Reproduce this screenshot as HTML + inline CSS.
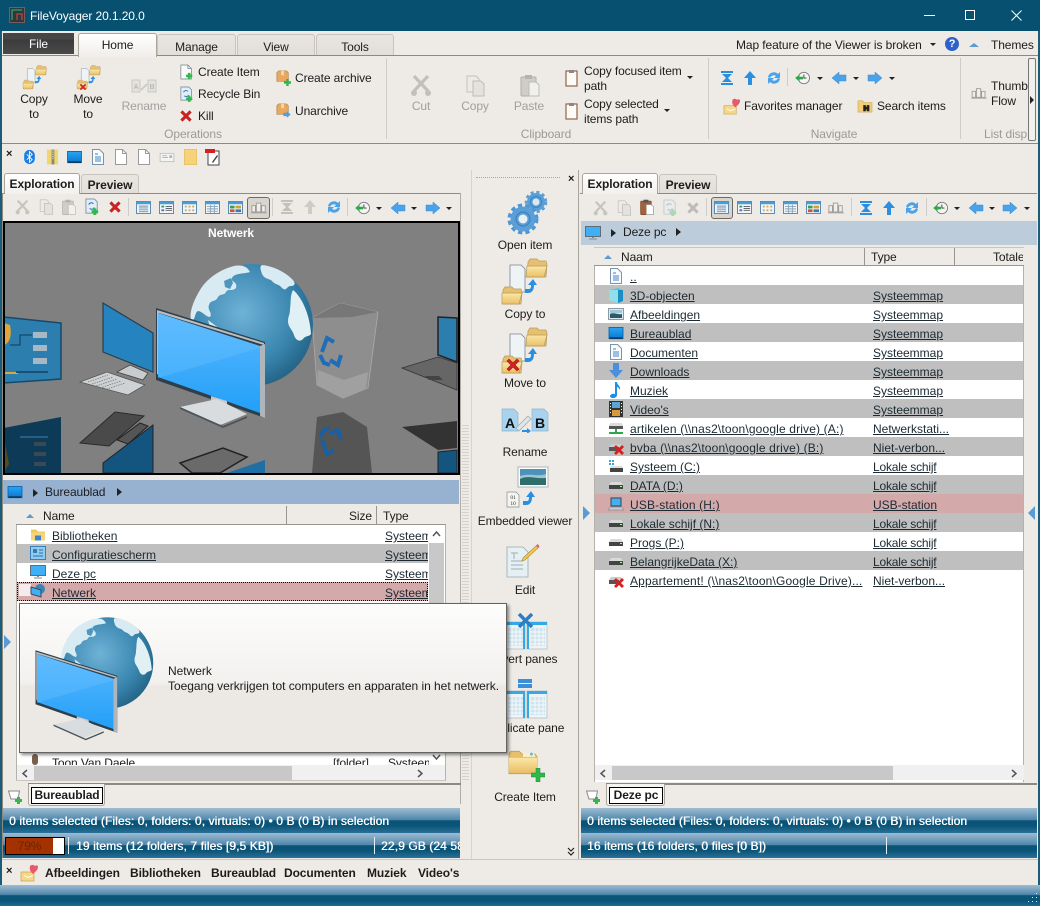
<!DOCTYPE html>
<html><head><meta charset="utf-8"><title>FileVoyager</title>
<style>
*{box-sizing:border-box}
html,body{margin:0;padding:0}
body{width:1040px;height:906px;overflow:hidden;position:relative;background:#eeebe6;font:12px/16px "Liberation Sans",sans-serif;color:#1c1c1c;letter-spacing:-.1px}
.a,.t,.c,svg.i{position:absolute}
.t{white-space:nowrap}
.c{white-space:nowrap;text-align:center;width:120px}
.g{color:#a0a0a0}
.l{color:#9a9a9a}
.tab{position:absolute;background:linear-gradient(#e9e5e0,#e2ded9);border:1px solid #c8c4bd;border-bottom:0;border-radius:3px 3px 0 0;text-align:center}
.stat{position:absolute;height:25px;background:linear-gradient(#9dbcd2 0%,#4f86aa 48%,#0a5478 50%,#0a5478 70%,#2a7098 100%);color:#fff;overflow:hidden;text-shadow:.4px 0 0 #fff;letter-spacing:.1px}
.r{position:absolute;height:19px;line-height:19px;margin-top:1px;white-space:nowrap;text-decoration:underline;color:#1c2a33;letter-spacing:0}
.p{letter-spacing:.15px}
.bg{position:absolute;height:19px}
.tri{position:absolute;width:0;height:0;border-style:solid}
.dn{border-width:3px 3px 0 3px;border-color:#222 transparent transparent transparent}
.rt{border-width:4px 0 4px 5px;border-color:transparent transparent transparent #222}
.up{border-width:0 5px 4px 5px;border-color:transparent transparent #5b9bd0 transparent}
.sep{position:absolute;width:1px;background:#cfcbc5}
.b{font-weight:bold}
</style></head><body>
<svg width="0" height="0" style="position:absolute">
<defs>
<linearGradient id="gsc" x1="0" y1="0" x2="0" y2="1"><stop offset="0" stop-color="#5cb8ff"/><stop offset="1" stop-color="#22a0f8"/></linearGradient>
<radialGradient id="ggl" cx=".42" cy=".4" r=".7"><stop offset="0" stop-color="#6fb2d6"/><stop offset=".6" stop-color="#3a86b0"/><stop offset="1" stop-color="#1d5878"/></radialGradient>
<linearGradient id="gfo" x1="0" y1="0" x2="0" y2="1"><stop offset="0" stop-color="#fbe6a8"/><stop offset="1" stop-color="#eac168"/></linearGradient>
<linearGradient id="gde" x1="0" y1="0" x2="0" y2="1"><stop offset="0" stop-color="#2aa5f2"/><stop offset="1" stop-color="#0a78cf"/></linearGradient>
<symbol id="globemon" viewBox="150 260 180 170" overflow="visible">
<circle cx="252" cy="325" r="61" fill="url(#ggl)"/>
<path d="M200 290c6-10 18-20 34-24 10-2 14 2 16 6-6 2-16 1-18 6-2 4 6 3 4 10-4 4-8 0-10 4-2 4-5 1-8 5-3 6-7 2-9 8-2 5 4 8 1 12-4 0-8-6-12-6-4 2-2 10-7 9-2-8 3-20 9-30z" fill="#d8ebf2"/>
<path d="M224 281l7-3 2 5-3 6-5-2z" fill="#4d97bf"/>
<path d="M262 265c10 1 22 6 30 14 5 5 2 7-1 7-5 0-4 6-9 2-3-4-6-3-9-6-3-4-8-2-11-8-1-4-3-7 0-9z" fill="#d8ebf2"/>
<path d="M293 290c8 6 17 24 18 44-2 3-5 1-8 5-4 4-8 0-9-4-2-6-6-8-6-14 0-5 2-6 2-12 1-6 0-14 3-19z" fill="#e0f0f5"/>
<path d="M208 320l8 6 5 4-3 2-8-5z" fill="#d8ebf2"/>
<path d="M156 308l109 34v76l-109-38z" fill="#2e3f4a"/>
<path d="M157 310l107 33v2l-105-32v62l-2-1z" fill="#b8bec2"/>
<path d="M158 313l102 33v67l-102-36z" fill="url(#gsc)"/>
<path d="M158 313l102 33v2l-102 30z" fill="#6bc3ff" opacity=".35"/>
<path d="M260 346l5-2v74l-5 -2z" fill="#aeb6bb"/>
<path d="M211 396l16 5 0 8-16-3z" fill="#c2c8cc"/>
<path d="M180 407l37-8 30 15-24 10-4 1z" fill="#d8dcdf"/>
<path d="M180 407l43 19 24-10v2l-24 10-43-19z" fill="#4c555b"/>
</symbol>
<symbol id="ct" viewBox="500 258 50 50">
<path d="M510 265h11l4 4v23h-15z" fill="#eef3f6" stroke="#7a8790" stroke-width=".8"/>
<path d="M528 262l2-3h7l2 2h7l1 3-1 13h-19z" fill="#e6c070" stroke="#b59a58" stroke-width=".7"/>
<path d="M527 266h20l-3 11h-18z" fill="url(#gfo)" stroke="#b59a58" stroke-width=".7"/>
<path d="M503 290l2-3h7l2 2h7l1 3-1 12h-18z" fill="#e6c070" stroke="#b59a58" stroke-width=".7"/>
<path d="M502 293h20l-3 11h-17z" fill="url(#gfo)" stroke="#b59a58" stroke-width=".7"/>
<path d="M525 289h4c2 0 2-2 2-4h-3l5-6 4 6h-3c0 5-2 8-6 8h-3z" fill="#2a8fe0"/>
</symbol>
<symbol id="gears" viewBox="505 188 48 48">
<circle cx="536" cy="202" r="9.5" fill="none" stroke="#5a9fd8" stroke-width="3.5" stroke-dasharray="3 2.6"/>
<circle cx="536" cy="202" r="9" fill="#5a9fd8"/><circle cx="536" cy="202" r="3.5" fill="#d8e8f4"/><circle cx="536" cy="202" r="5.5" fill="none" stroke="#3f83bd" stroke-width="1"/>
<circle cx="523" cy="219" r="13" fill="none" stroke="#4f97d4" stroke-width="5" stroke-dasharray="4 3"/>
<circle cx="523" cy="219" r="12.5" fill="#5a9fd8"/><circle cx="523" cy="219" r="4.5" fill="#e8f0f6"/><circle cx="523" cy="219" r="7" fill="none" stroke="#3f83bd" stroke-width="1.2"/>
</symbol>
<symbol id="rename" viewBox="500 407 50 26">
<path d="M502 409h12l4 4v18h-16z" fill="#a9d2ee" stroke="#8fb4cc" stroke-width=".7"/>
<path d="M532 409h12l4 4v18h-16z" fill="#a9d2ee" stroke="#8fb4cc" stroke-width=".7"/>
<text x="505" y="428" font-size="14" font-weight="bold" font-family="Liberation Sans" fill="#111">A</text>
<text x="535" y="428" font-size="14" font-weight="bold" font-family="Liberation Sans" fill="#111">B</text>
<path d="M516 428l12-12 3 3-12 12z" fill="#dfe6ea" stroke="#9aa5ab" stroke-width=".7"/>
<path d="M522 430h5v-2l4 3-4 3v-2h-5z" fill="#2a8fe0"/>
</symbol>
<symbol id="embed" viewBox="505 465 45 44">
<rect x="518" y="467" width="30" height="20" fill="#fff" stroke="#aab4ba"/>
<rect x="520" y="469" width="26" height="16" fill="#9fc4d4"/><path d="M520 479c8-4 14 0 26-1v7h-26z" fill="#2d6d6a"/><path d="M520 469h26v5c-8 3-16-1-26 2z" fill="#4d92b8"/>
<path d="M507 492h9l3 3v12h-12z" fill="#f4f4f0" stroke="#8a8f8f" stroke-width=".7"/>
<text x="513" y="499" font-size="5.5" text-anchor="middle" font-family="Liberation Serif" fill="#333">01</text>
<text x="513" y="505" font-size="5.5" text-anchor="middle" font-family="Liberation Serif" fill="#333">10</text>
<path d="M523 501h4c2 0 2-2 2-4h-3l5-6 4 6h-3c0 5-2 8-6 8h-3z" fill="#2a8fe0"/>
</symbol>
<symbol id="edit" viewBox="505 541 36 38">
<path d="M507 547h16l5 5v25h-21z" fill="#e5f0f4" stroke="#9aa8ae" stroke-width=".8"/>
<path d="M511 553h7M514 553v6M511 561h12M511 565h12M511 569h12" stroke="#a0acb2" fill="none"/>
<path d="M523 558l14-13 2 2-14 13-3 1z" fill="#f2c94c" stroke="#a88a2c" stroke-width=".6"/>
<path d="M536 546l1.500-2 2 2-1.500 2z" fill="#e0607a"/>
</symbol>
<symbol id="panes" viewBox="505 612 44 38">
<path d="M505 622h20v27h-20zM527 622h20v27h-20z" fill="#eef3f6" stroke="#aebcc4" stroke-width=".7"/>
<path d="M527 622h2v27h-2zM529 622h18v3h-18zM505 622h20v3h-20zM523 622h2v27h-2z" fill="#35a8e6"/>
<path d="M508 628h15v18h-15zM531 628h14v18h-14z" fill="#cfe3ee"/>
<path d="M508 632h15M508 636h15M508 640h15M508 644h15M512 628v18M516 628v18M520 628v18M531 632h14M531 636h14M531 640h14M531 644h14M535 628v18M539 628v18M543 628v18" stroke="#fff" stroke-width=".8"/>
</symbol>
<symbol id="fold" viewBox="0 0 32 26">
<path d="M1 4l2-3h9l3 3h14l2 3v18H1z" fill="#e8bf6a" stroke="#b69650" stroke-width=".7"/>
<path d="M1 8h30v15H1z" fill="url(#gfo)"/>
<path d="M16 3h9c3 0 4 2 4 4h-13z" fill="#fdf0c8"/><circle cx="25" cy="4" r="1.500" fill="#5fb8d0"/>
</symbol>
<symbol id="plus" viewBox="0 0 14 14"><path d="M5 0h4v5h5v4H9v5H5V9H0V5h5z" fill="#2fb84b" stroke="#1a8a34" stroke-width=".5"/></symbol>
<symbol id="redx" viewBox="0 0 16 16"><path d="M2 4l2-2 4 4 4-4 2 2-4 4 4 4-2 2-4-4-4 4-2-2 4-4z" fill="#d42020" stroke="#a91414" stroke-width=".6"/></symbol>
<symbol id="scis" viewBox="0 0 22 22"><path d="M4 1l14 15M18 1L4 16" stroke="currentColor" stroke-width="3.200" fill="none"/><circle cx="4" cy="18" r="3" fill="currentColor"/><circle cx="18" cy="18" r="3" fill="currentColor"/></symbol>
<symbol id="copy" viewBox="0 0 22 22"><path d="M3 1h9l3 3v13H3z" fill="#eceae6" stroke="#c4c2bd"/><path d="M9 6h8l3 3v12H9z" fill="#e4e2de" stroke="#bebcb7"/></symbol>
<symbol id="paste" viewBox="0 0 22 24"><rect x="2" y="3" width="15" height="19" rx="1" fill="#cfcdc8" stroke="#b0aea9"/><rect x="6" y="1" width="7" height="4" fill="#b6b4af"/><path d="M10 8h7l3 3v11H10z" fill="#f2f0ed" stroke="#bebcb7"/></symbol>
<symbol id="pastec" viewBox="0 0 22 24"><rect x="2" y="3" width="15" height="19" rx="1" fill="#a5623a" stroke="#7a4526"/><rect x="6" y="1" width="7" height="4" fill="#555"/><path d="M10 8h7l3 3v11H10z" fill="#fff" stroke="#999"/></symbol>
<symbol id="recyc" viewBox="0 0 16 18"><path d="M1 1h9l3 3v12H1z" fill="#e3edf5" stroke="#6c7f8e" stroke-width=".8"/><path d="M4 7a3 3 0 0 1 5-1M10 10a3 3 0 0 1-5 1" stroke="#2a7fd0" fill="none" stroke-width="1.200"/><path d="M9 11h3v2h2v3h-2v2H9v-2H7v-3h2z" fill="#2fb84b"/></symbol>
<symbol id="cit" viewBox="0 0 16 18"><path d="M1 1h8l4 4v12H1z" fill="#fafafa" stroke="#6c7f8e" stroke-width=".8"/><path d="M9 1v4h4" fill="none" stroke="#6c7f8e" stroke-width=".8"/><path d="M9 10h3v2h2v3h-2v2H9v-2H7v-3h2z" fill="#2fb84b"/></symbol>
<symbol id="box" viewBox="0 0 16 16"><path d="M1 3l2-2h9l2 2v10H1z" fill="#e7a860" stroke="#b07a3c" stroke-width=".7"/><path d="M6 1h3v5H6z" fill="#f7dbb0"/></symbol>
<symbol id="clipb" viewBox="0 0 13 18"><rect x="1" y="2" width="11" height="15" fill="#fdfbf6" stroke="#94614a" stroke-width="1.200"/><rect x="4" y="1" width="5" height="3" fill="#888"/></symbol>
<symbol id="v1" viewBox="0 0 16 14"><rect x=".5" y=".5" width="15" height="13" fill="#f2f6fa" stroke="#4b86b8"/><rect x="1" y="1" width="14" height="2.500" fill="#4b9bd6"/><path d="M3 5.500h10M3 7.500h10M3 9.500h10M3 11.500h10" stroke="#6f8ea8"/></symbol>
<symbol id="v2" viewBox="0 0 16 14"><rect x=".5" y=".5" width="15" height="13" fill="#f2f6fa" stroke="#4b86b8"/><rect x="1" y="1" width="14" height="2.500" fill="#4b9bd6"/><rect x="2.500" y="5" width="3" height="2" fill="#3a9a5a"/><rect x="2.500" y="9" width="3" height="2" fill="#3a7aba"/><path d="M7 6h7M7 10h7M7 8h7" stroke="#555"/></symbol>
<symbol id="v3" viewBox="0 0 16 14"><rect x=".5" y=".5" width="15" height="13" fill="#f2f6fa" stroke="#4b86b8"/><rect x="1" y="1" width="14" height="2.500" fill="#4b9bd6"/><path d="M3 5h2v2H3zM7 5h2v2H7zM11 5h2v2h-2zM3 9h2v2H3zM7 9h2v2H7zM11 9h2v2h-2z" fill="#d6a850"/></symbol>
<symbol id="v4" viewBox="0 0 16 14"><rect x=".5" y=".5" width="15" height="13" fill="#f2f6fa" stroke="#4b86b8"/><rect x="1" y="1" width="14" height="2.500" fill="#4b9bd6"/><path d="M2 6h12M2 8.500h12M2 11h12M6 4v9M10 4v9" stroke="#8aa4b8"/></symbol>
<symbol id="v5" viewBox="0 0 16 14"><rect x=".5" y=".5" width="15" height="13" fill="#f2f6fa" stroke="#4b86b8"/><rect x="1" y="1" width="14" height="2.500" fill="#4b9bd6"/><path d="M2 5h5v3H2z" fill="#3aa050"/><path d="M8 5h6v3H8z" fill="#d6a030"/><path d="M2 9h5v3H2z" fill="#d05040"/><path d="M8 9h6v3H8z" fill="#3a7aba"/></symbol>
<symbol id="thumb" viewBox="0 0 18 14"><path d="M1 5h4v7H1zM6 2h5v10H6zM12 5h4v7h-4z" fill="#f0eeea" stroke="#9c9a96"/><path d="M0 13h18" stroke="#9c9a96"/></symbol>
<symbol id="top" viewBox="0 0 16 16"><path d="M2 1h12v2H2zM3 4h10L9 8l4 4H3l4-4zM2 13h12v2H2z" fill="currentColor"/></symbol>
<symbol id="upa" viewBox="0 0 16 16"><path d="M8 1l6 7h-4v7H6V8H2z" fill="currentColor"/></symbol>
<symbol id="refr" viewBox="0 0 16 16"><path d="M2 7a6 6 0 0 1 10-3l2-2v6H8l2-2A4 4 0 0 0 4 8zM14 9a6 6 0 0 1-10 3l-2 2V8h6L6 10a4 4 0 0 0 6-2z" fill="#4aa3e8"/></symbol>
<symbol id="clock" viewBox="0 0 18 16"><circle cx="10" cy="8" r="6.500" fill="#f4f4f0" stroke="#778"/><path d="M10 4v4h3" stroke="#333" fill="none"/><path d="M0 8l5-4v2.500h4v3H5V12z" fill="#2fa84b"/></symbol>
<symbol id="la" viewBox="0 0 16 14"><path d="M1 7l7-6v3h7v6H8v3z" fill="#4aa3e8" stroke="#3b8ad0" stroke-width=".5"/></symbol>
<symbol id="ra" viewBox="0 0 16 14"><path d="M15 7L8 1v3H1v6h7v3z" fill="#4aa3e8" stroke="#3b8ad0" stroke-width=".5"/></symbol>
<symbol id="desk" viewBox="0 0 16 14"><rect x=".5" y=".5" width="15" height="12" fill="url(#gde)" stroke="#0a6ab0"/><path d="M1 11h14v2H1z" fill="#0a3f6a"/></symbol>
<symbol id="pc" viewBox="0 0 16 14"><rect x=".5" y=".5" width="15" height="10" fill="#3fb0f5" stroke="#5d6e78"/><path d="M7 11h2v1H7zM4 12.500h8v1H4z" fill="#7e8b93"/></symbol>
<symbol id="page" viewBox="0 0 12 16"><path d="M.5.500h7l4 4v11H.5z" fill="#fff" stroke="#9a9a9a"/><path d="M7.500.500v4h4" fill="none" stroke="#9a9a9a"/></symbol>
<symbol id="docl" viewBox="0 0 12 16"><path d="M.5.500h7l4 4v11H.5z" fill="#f8fbfe" stroke="#7b93a8"/><path d="M3 5h3M3 8h6M3 10h6M3 12h6" stroke="#3f86c6"/></symbol>
<symbol id="sysf" viewBox="0 0 16 14"><path d="M1 2h5l2 2h7v9H1z" fill="#f0c860"/><path d="M1 5h14v8H1z" fill="#f5d47c"/><path d="M5 8h6v5H5z" fill="#3a85c5"/></symbol>
<symbol id="ctrl" viewBox="0 0 16 14"><rect x=".5" y=".5" width="15" height="13" fill="#8fcdf0" stroke="#3a80b8"/><rect x="3" y="3" width="4" height="4" fill="#3a7ab0"/><path d="M9 4h4M9 7h4M3 10h10" stroke="#2f6fa6"/></symbol>
<symbol id="net" viewBox="0 0 16 14"><circle cx="10" cy="5" r="5" fill="#3a86b0"/><path d="M1 3l10 3v7L1 10z" fill="#3fb0f5" stroke="#445"/></symbol>
<symbol id="cube" viewBox="0 0 16 16"><path d="M1 3l9-2 5 2v11l-5 2-9-3z" fill="#55c6dd"/><path d="M10 3l5 0v11l-5 2z" fill="#1b8fc4"/><path d="M1 3l9 0v13l-9-3z" fill="#8fe0ec"/></symbol>
<symbol id="pic" viewBox="0 0 16 12"><rect x=".5" y=".5" width="15" height="11" fill="#dde9f1" stroke="#8b99a3"/><path d="M2 2h12v3H2z" fill="#a4c6dc"/><path d="M2 6c4-2 8 1 12 0v4H2z" fill="#2e5a66"/></symbol>
<symbol id="dl" viewBox="0 0 16 16"><path d="M5 0h6v7h4l-7 8-7-8h4z" fill="#4a90de"/></symbol>
<symbol id="note" viewBox="0 0 12 16"><path d="M5 0h2c0 3 4 4 3 8-1-2-2-3-3-3v8c0 2-2 3-4 3s-3-1-3-2 2-3 5-2z" fill="#1c8fe8"/></symbol>
<symbol id="film" viewBox="0 0 14 16"><rect width="14" height="16" fill="#333"/><rect x="3" y="1" width="8" height="6" fill="#5aa6d0"/><rect x="3" y="9" width="8" height="6" fill="#d69a3a"/><path d="M1 2h1v1H1zM1 5h1v1H1zM1 8h1v1H1zM1 11h1v1H1zM12 2h1v1h-1zM12 5h1v1h-1zM12 8h1v1h-1zM12 11h1v1h-1z" fill="#fff"/></symbol>
<symbol id="drv" viewBox="0 0 16 14"><path d="M1 8l2-3h10l2 3z" fill="#dadada"/><rect x="1" y="8" width="14" height="4" fill="#444"/><rect x="12" y="9" width="2" height="1" fill="#9f9"/></symbol>
<symbol id="ndrv" viewBox="0 0 16 14"><path d="M2 1h12l1 3H1z" fill="#ddd"/><rect x="1" y="4" width="14" height="3" fill="#555"/><path d="M7 7h2v3h6v2H1v-2h6z" fill="#2fa84b"/></symbol>
<symbol id="xdrv" viewBox="0 0 16 14"><path d="M1 6l2-3h10l2 3z" fill="#ccc"/><rect x="1" y="6" width="10" height="4" fill="#555"/><path d="M6 6l2-2 3 3 3-3 2 2-3 3 3 3-2 2-3-3-3 3-2-2 3-3z" fill="#d42020"/></symbol>
<symbol id="sdrv" viewBox="0 0 16 14"><path d="M1 1h2v2H1zM4 1h2v2H4zM1 4h2v2H1zM4 4h2v2H4z" fill="#30a8e0"/><path d="M2 9l1-2h11l1 2z" fill="#ddd"/><rect x="2" y="9" width="13" height="4" fill="#444"/></symbol>
<symbol id="lap" viewBox="0 0 16 14"><rect x="3" y="1" width="10" height="8" fill="#45b0ee" stroke="#345"/><path d="M2 10h12l2 3H0z" fill="#c4cbd0" stroke="#678" stroke-width=".5"/></symbol>
<symbol id="fav" viewBox="0 0 18 18"><path d="M1 8h13v9H1z" fill="#f6d788" stroke="#c9a550" stroke-width=".7"/><path d="M10 2c2-2 4-1 5 0 1-1 3-1 3 1 0 3-3 5-5 7-2-2-4-4-3-8z" fill="#e85a6a"/><path d="M4 11l4 2 5-2v1l-5 2-4-2z" fill="#fff"/></symbol>
<symbol id="srch" viewBox="0 0 18 16"><path d="M1 2h5l2 2h9v11H1z" fill="#f2ce78" stroke="#c9a550" stroke-width=".7"/><path d="M7 7h3v7H7zM11 7h3v7h-3zM9 9h3v3H9z" fill="#222"/></symbol>
<symbol id="addt" viewBox="0 0 16 14"><path d="M.5 1h11l-1 5-1 3H3z" fill="#fff" stroke="#8a8a8a"/><path d="M9 7h3v2h2v3h-2v2H9v-2H7V9h2z" fill="#2fb84b"/></symbol>
<symbol id="bt" viewBox="0 0 14 18"><rect x="1" y="1" width="12" height="16" rx="6" fill="#1d7fe6"/><path d="M4 6l6 6-3 3V3l3 3-6 6" stroke="#fff" fill="none"/></symbol>
<symbol id="zip" viewBox="0 0 14 16"><rect x="1" y="0" width="12" height="16" fill="#f1d474"/><path d="M6 0h3v16H6z" fill="#8a8a6a"/><path d="M7 1h1v1H7zM7 3h1v1H7zM7 5h1v1H7zM7 7h1v1H7zM7 9h1v1H7z" fill="#fff"/></symbol>
<symbol id="mail" viewBox="0 0 16 12"><rect x=".5" y="1.500" width="15" height="9" fill="#f4f4f2" stroke="#c0c0bc"/><path d="M3 4h5M3 6h6M11 4h2v2h-2z" stroke="#a8b8c4" fill="#a8b8c4"/></symbol>
<symbol id="fy" viewBox="0 0 13 16"><rect width="13" height="16" fill="#f6d27a" stroke="#e0b850"/></symbol>
<symbol id="pdf" viewBox="0 0 16 17"><path d="M3 2h11v14H3z" fill="#fff" stroke="#444"/><rect y="0" width="10" height="4" fill="#d42020"/><path d="M7 13l5-7 1 1-5 7z" fill="#444"/></symbol>
<symbol id="ren" viewBox="0 0 26 14"><rect x="1" y="1" width="8" height="12" fill="#e4e2de" stroke="#cac8c3"/><rect x="17" y="1" width="8" height="12" fill="#e4e2de" stroke="#cac8c3"/><path d="M10 11l6-6" stroke="#ccc" stroke-width="2"/><text x="5" y="10" font-size="7" text-anchor="middle" font-family="Liberation Sans" fill="#aaa">A</text><text x="21" y="10" font-size="7" text-anchor="middle" font-family="Liberation Sans" fill="#aaa">B</text></symbol>
<symbol id="logo" viewBox="0 0 16 16"><rect x=".5" y=".5" width="15" height="15" fill="#2b3a3f" stroke="#7a5a5a"/><path d="M3 13V3h10" fill="none" stroke="#3aa06a" stroke-width="1.300"/><path d="M8 13V7h5v6" fill="none" stroke="#c04040" stroke-width="1.300"/></symbol>
</defs></svg>

<!-- Window frame & title -->
<div class="a" style="left:0;top:0;width:1040px;height:31px;background:#07506f"></div>
<svg class="i" style="left:9px;top:7px;width:16px;height:16px"><use href="#logo"/></svg>
<div class="t" style="left:30px;top:8px;color:#fff">FileVoyager 20.1.20.0</div>
<div class="a" style="left:924px;top:15px;width:11px;height:1px;background:#fff"></div>
<div class="a" style="left:965px;top:10px;width:10px;height:10px;border:1px solid #fff"></div>
<svg class="i" style="left:1011px;top:10px;width:11px;height:11px"><path d="M.5.500l10 10M10.500.500l-10 10" stroke="#fff" fill="none"/></svg>

<!-- Tabs row -->
<div class="a" style="left:3px;top:33px;width:71px;height:21px;background:linear-gradient(#464646 0,#464646 30%,#3a3a3a 30%,#4a4a4a 100%);color:#fff;text-align:center;line-height:22px">File</div>
<div class="tab" style="left:157px;top:34px;width:79px;height:21px;line-height:25px">Manage</div>
<div class="tab" style="left:237px;top:34px;width:78px;height:21px;line-height:25px">View</div>
<div class="tab" style="left:316px;top:34px;width:78px;height:21px;line-height:25px">Tools</div>
<div class="a" style="left:2px;top:55px;width:1036px;height:1px;background:#8c8a82"></div>
<div class="a" style="left:78px;top:33px;width:79px;height:24px;background:linear-gradient(#fff,#f0eeea);border:1px solid #aaa69e;border-bottom:0;border-radius:3px 3px 0 0;text-align:center;line-height:23px">Home</div>
<div class="t" style="left:736px;top:37px">Map feature of the Viewer is broken</div>
<div class="tri dn" style="left:930px;top:43px"></div>
<div class="a" style="left:945px;top:37px;width:14px;height:14px;border-radius:7px;background:#2f62c8;color:#fff;text-align:center;font-weight:bold;font-size:11px;line-height:14px">?</div>
<div class="tri up" style="left:969px;top:43px"></div>
<div class="t" style="left:991px;top:37px">Themes</div>

<!-- Ribbon -->
<svg class="i" style="left:22px;top:65px;width:26px;height:26px"><use href="#ct"/></svg>
<div class="c" style="left:-26px;top:91px">Copy</div><div class="c" style="left:-26px;top:106px">to</div>
<svg class="i" style="left:76px;top:65px;width:26px;height:26px"><use href="#ct"/></svg>
<svg class="i" style="left:79px;top:83px;width:8px;height:8px"><use href="#redx"/></svg>
<div class="c" style="left:28px;top:91px">Move</div><div class="c" style="left:28px;top:106px">to</div>
<svg class="i" style="left:131px;top:79px;width:26px;height:14px"><use href="#ren"/></svg>
<div class="c g" style="left:84px;top:98px">Rename</div>
<svg class="i" style="left:180px;top:64px;width:14px;height:16px"><use href="#cit"/></svg>
<div class="t" style="left:198px;top:64px">Create Item</div>
<svg class="i" style="left:180px;top:86px;width:14px;height:16px"><use href="#recyc"/></svg>
<div class="t" style="left:198px;top:86px">Recycle Bin</div>
<svg class="i" style="left:179px;top:109px;width:14px;height:14px"><use href="#redx"/></svg>
<div class="t" style="left:198px;top:108px">Kill</div>
<svg class="i" style="left:276px;top:70px;width:14px;height:14px"><use href="#box"/></svg>
<svg class="i" style="left:284px;top:79px;width:7px;height:7px"><use href="#plus"/></svg>
<div class="t" style="left:295px;top:70px">Create archive</div>
<svg class="i" style="left:276px;top:103px;width:14px;height:14px"><use href="#box"/></svg>
<svg class="i" style="left:283px;top:111px;width:8px;height:7px"><use href="#ra"/></svg>
<div class="t" style="left:295px;top:103px">Unarchive</div>
<div class="c l" style="left:133px;top:126px">Operations</div>
<div class="sep" style="left:386px;top:58px;height:81px"></div>

<svg class="i" style="left:410px;top:75px;width:22px;height:22px;color:#c2c0bb"><use href="#scis"/></svg>
<div class="c g" style="left:361px;top:98px">Cut</div>
<svg class="i" style="left:464px;top:75px;width:22px;height:22px"><use href="#copy"/></svg>
<div class="c g" style="left:415px;top:98px">Copy</div>
<svg class="i" style="left:519px;top:74px;width:22px;height:24px"><use href="#paste"/></svg>
<div class="c g" style="left:469px;top:98px">Paste</div>
<svg class="i" style="left:565px;top:69px;width:13px;height:18px"><use href="#clipb"/></svg>
<div class="t" style="left:584px;top:63px">Copy focused item</div><div class="t" style="left:584px;top:78px">path</div>
<div class="tri dn" style="left:687px;top:76px"></div>
<svg class="i" style="left:565px;top:102px;width:13px;height:18px"><use href="#clipb"/></svg>
<div class="t" style="left:584px;top:96px">Copy selected</div><div class="t" style="left:584px;top:111px">items path</div>
<div class="tri dn" style="left:664px;top:109px"></div>
<div class="c l" style="left:486px;top:126px">Clipboard</div>
<div class="sep" style="left:708px;top:58px;height:81px"></div>

<svg class="i" style="left:719px;top:70px;width:16px;height:16px;color:#2a8fe0"><use href="#top"/></svg>
<svg class="i" style="left:742px;top:70px;width:16px;height:16px;color:#2a8fe0"><use href="#upa"/></svg>
<svg class="i" style="left:766px;top:70px;width:16px;height:16px"><use href="#refr"/></svg>
<div class="sep" style="left:787px;top:68px;height:18px"></div>
<svg class="i" style="left:795px;top:71px;width:16px;height:14px"><use href="#clock"/></svg>
<div class="tri dn" style="left:817px;top:77px"></div>
<svg class="i" style="left:831px;top:71px;width:16px;height:14px"><use href="#la"/></svg>
<div class="tri dn" style="left:853px;top:77px"></div>
<svg class="i" style="left:867px;top:71px;width:16px;height:14px"><use href="#ra"/></svg>
<div class="tri dn" style="left:889px;top:77px"></div>
<svg class="i" style="left:723px;top:98px;width:17px;height:17px"><use href="#fav"/></svg>
<div class="t" style="left:744px;top:98px">Favorites manager</div>
<svg class="i" style="left:857px;top:99px;width:16px;height:14px"><use href="#srch"/></svg>
<div class="t" style="left:877px;top:98px">Search items</div>
<div class="c l" style="left:774px;top:126px">Navigate</div>
<div class="sep" style="left:960px;top:58px;height:81px"></div>
<svg class="i" style="left:971px;top:87px;width:16px;height:12px"><use href="#thumb"/></svg>
<div class="a" style="left:991px;top:78px;width:37px;height:32px;overflow:hidden"><div class="t" style="left:0;top:0">Thumb</div><div class="t" style="left:0;top:15px">Flow</div></div>
<div class="a" style="left:984px;top:126px;width:43px;height:16px;overflow:hidden;color:#9a9a9a;white-space:nowrap">List display</div>
<div class="a" style="left:1028px;top:58px;width:8px;height:83px;border:1px solid #777;border-radius:2px;background:#f2f0ec"></div>
<div class="tri rt" style="left:1030px;top:96px;border-width:4px 0 4px 4px"></div>
<div class="a" style="left:2px;top:143px;width:1036px;height:1px;background:#8c8a82"></div>

<!-- Quick bar -->
<div class="t b" style="left:6px;top:146px;font-size:11px">×</div>
<svg class="i" style="left:23px;top:149px;width:13px;height:16px"><use href="#bt"/></svg>
<svg class="i" style="left:46px;top:149px;width:13px;height:16px"><use href="#zip"/></svg>
<svg class="i" style="left:66px;top:151px;width:17px;height:13px"><use href="#desk"/></svg>
<svg class="i" style="left:91px;top:149px;width:14px;height:16px"><use href="#docl"/></svg>
<svg class="i" style="left:115px;top:149px;width:12px;height:16px"><use href="#page"/></svg>
<svg class="i" style="left:138px;top:149px;width:12px;height:16px"><use href="#page"/></svg>
<svg class="i" style="left:159px;top:152px;width:16px;height:11px"><use href="#mail"/></svg>
<svg class="i" style="left:184px;top:149px;width:13px;height:16px"><use href="#fy"/></svg>
<svg class="i" style="left:205px;top:149px;width:16px;height:17px"><use href="#pdf"/></svg>

<!-- Left pane -->
<div class="a" style="left:3px;top:193px;width:458px;height:1px;background:#8c8a82"></div>
<div class="a" style="left:460px;top:193px;width:1px;height:611px;background:#b0ada6"></div>
<div class="a" style="left:2px;top:193px;width:1px;height:665px;background:#8c8a82"></div>
<div class="tab b" style="left:81px;top:174px;width:58px;height:19px;line-height:21px;color:#1c1c1c">Preview</div>
<div class="a b" style="left:4px;top:173px;width:76px;height:21px;background:linear-gradient(#fff,#f2f0ec);border:1px solid #a8a49c;border-bottom:0;border-radius:3px 3px 0 0;text-align:center;line-height:20px">Exploration</div>

<svg class="i" style="left:15px;top:200px;width:15px;height:15px;color:#c6c4bf"><use href="#scis"/></svg>
<svg class="i" style="left:38px;top:199px;width:16px;height:16px"><use href="#copy"/></svg>
<svg class="i" style="left:61px;top:199px;width:16px;height:17px"><use href="#paste"/></svg>
<svg class="i" style="left:85px;top:198px;width:15px;height:17px"><use href="#recyc"/></svg>
<svg class="i" style="left:108px;top:200px;width:14px;height:14px"><use href="#redx"/></svg>
<div class="sep" style="left:128px;top:198px;height:18px"></div>
<svg class="i" style="left:136px;top:201px;width:15px;height:13px"><use href="#v1"/></svg>
<svg class="i" style="left:159px;top:201px;width:15px;height:13px"><use href="#v2"/></svg>
<svg class="i" style="left:182px;top:201px;width:15px;height:13px"><use href="#v3"/></svg>
<svg class="i" style="left:205px;top:201px;width:15px;height:13px"><use href="#v4"/></svg>
<svg class="i" style="left:228px;top:201px;width:15px;height:13px"><use href="#v5"/></svg>
<div class="a" style="left:247px;top:197px;width:23px;height:22px;border:1px solid #6e6a62;border-radius:3px;background:#d8d5cf"></div>
<svg class="i" style="left:251px;top:201px;width:16px;height:13px"><use href="#thumb"/></svg>
<div class="sep" style="left:272px;top:198px;height:18px"></div>
<svg class="i" style="left:279px;top:199px;width:16px;height:16px;color:#c2c0bb"><use href="#top"/></svg>
<svg class="i" style="left:302px;top:199px;width:16px;height:16px;color:#cdcbc6"><use href="#upa"/></svg>
<svg class="i" style="left:326px;top:199px;width:16px;height:16px"><use href="#refr"/></svg>
<div class="sep" style="left:347px;top:198px;height:18px"></div>
<svg class="i" style="left:355px;top:201px;width:16px;height:14px"><use href="#clock"/></svg>
<div class="tri dn" style="left:376px;top:207px"></div>
<svg class="i" style="left:390px;top:201px;width:16px;height:14px"><use href="#la"/></svg>
<div class="tri dn" style="left:411px;top:207px"></div>
<svg class="i" style="left:425px;top:201px;width:16px;height:14px"><use href="#ra"/></svg>
<div class="tri dn" style="left:446px;top:207px"></div>

<!-- Preview image -->
<div class="a" style="left:3px;top:221px;width:457px;height:254px;background:#808080;border:2px solid #000;overflow:hidden"></div>
<svg class="i" style="left:5px;top:223px;width:453px;height:250px" viewBox="5 223 453 250">
<path d="M4 317l57 6v56l-57 4z" fill="#2b7eae" stroke="#15496b" stroke-width="1.500"/>
<path d="M4 345c6-2 8-10 6-20l-6-2zM4 372h14v2H4z" fill="#e0a63a"/>
<path d="M10 345h10v-10h12" stroke="#123a55" fill="none"/>
<path d="M33 332h14v6H33zM33 345h14v6H33zM33 358h14v6H33z" fill="#a6b8c4"/>
<path d="M16 371h32v2H16z" fill="#17507a"/>
<path d="M103 303l50 30v39l-50-20z" fill="#2583c0" stroke="#2c3d4a" stroke-width="1.200"/>
<path d="M117 372l13-7 18 8-5 7z" fill="#c8ccce" stroke="#444" stroke-width=".8"/>
<path d="M80 382l27-10 38 13-17 10z" fill="#cfd2d4" stroke="#555" stroke-width=".8"/>
<path d="M88 382l20-7M92 384l21-7M96 386l21-7M100 388l21-7M104 390l21-7" stroke="#777" stroke-width=".8" stroke-dasharray="1.500 1"/>
<path d="M312 318l28-15 38 9-10 76-25 10-26-13z" fill="#8e8e8e" stroke="#aaa" stroke-width=".8"/>
<path d="M312 318l28-15 38 9-26 5z" fill="#777"/>
<path d="M318 370l26 10 24-8-2 16-23 10-26-13z" fill="#a0a0a0"/>
<g fill="none" stroke="#1f6db8" stroke-width="4"><path d="M322 352l5-14 7 4"/><path d="M330 360l8 5 3-10"/><path d="M320 355l4 8 6 2"/></g>
<path d="M438 317l19 1v44l-19-7z" fill="#2b7eae" stroke="#222" stroke-width="1.500"/>
<path d="M402 368l36-11 19 6v27z" fill="#666" stroke="#333" stroke-width=".8"/>
<path d="M425 376h14l4 4h-14z" fill="#444"/>
<path d="M4 428l57-11v56H4z" fill="#0d3a56"/><path d="M20 436h28v2H20z" fill="#245f88"/><path d="M34 442h12v4H34zM34 452h12v4H34zM34 462h12v4H34z" fill="#3a4a55"/>
<path d="M4 438l5 26-5 8z" fill="#5a4a20"/>
<path d="M80 443l35-31 29 4-35 30z" fill="#4a4a4a" stroke="#2b2b2b"/>
<path d="M117 440l23-17 8 3-20 18z" fill="#555" stroke="#222"/>
<path d="M103 463l50-38v48h-50z" fill="#14557f" stroke="#222"/>
<path d="M180 463l43-15 24 9-27 16h-28z" fill="#6a6a6a" stroke="#222" stroke-width="1.500"/>
<path d="M227 473l38-13v13z" fill="#1f6fa5"/>
<path d="M312 473l5-56 26-5 24 15 5 46z" fill="#555"/>
<g fill="none" stroke="#1a5f9f" stroke-width="4"><path d="M322 440l5 14 7-4"/><path d="M330 434l8-4 3 9"/><path d="M320 437l4-7 6-2"/></g>
<path d="M402 427l55-6v27l-19 2z" fill="#333"/>
<path d="M438 452l19-2v23h-19z" fill="#14557f" stroke="#222"/>
<use href="#globemon" x="150" y="260" width="180" height="170"/>
</svg>
<div class="c b" style="left:171px;top:225px;color:#fff;font-size:12px">Netwerk</div>

<!-- Left breadcrumb -->
<div class="a" style="left:3px;top:480px;width:456px;height:24px;background:#97b2d1"></div>
<svg class="i" style="left:7px;top:486px;width:16px;height:13px"><use href="#desk"/></svg>
<div class="tri rt" style="left:33px;top:489px"></div>
<div class="t" style="left:45px;top:484px">Bureaublad</div>
<div class="tri rt" style="left:117px;top:488px"></div>
<div class="a" style="left:3px;top:504px;width:13px;height:279px;background:#eeebe6"></div>

<!-- Left list -->
<div class="a" style="left:16px;top:505px;width:430px;height:20px;background:#eeebe6;border-bottom:1px solid #9a968f"></div>
<div class="a" style="left:16px;top:525px;width:430px;height:255px;background:#fff;border-left:1px solid #b5b2ac;border-right:1px solid #b5b2ac"></div>
<div class="tri up" style="left:26px;top:514px;border-width:0 4px 4px 4px"></div>
<div class="t" style="left:43px;top:508px">Name</div>
<div class="sep" style="left:286px;top:506px;height:18px;background:#9a968f"></div>
<div class="t" style="left:349px;top:508px">Size</div>
<div class="sep" style="left:376px;top:506px;height:18px;background:#9a968f"></div>
<div class="t" style="left:383px;top:508px">Type</div>
<div class="a" style="left:429px;top:543px;width:15px;height:150px;background:#c8c8c8"></div>
<div class="bg" style="left:17px;top:544px;width:411px;background:#bfbfbf"></div>
<div class="bg" style="left:17px;top:582px;width:411px;background:#d4a9a9;outline:1px dotted #000;outline-offset:-1px"></div>
<div class="a" style="left:19px;top:584px;width:12px;height:12px;background:#f2ecec"></div>
<svg class="i" style="left:30px;top:527px;width:16px;height:15px"><use href="#sysf"/></svg>
<svg class="i" style="left:30px;top:546px;width:16px;height:14px"><use href="#ctrl"/></svg>
<svg class="i" style="left:30px;top:565px;width:16px;height:14px"><use href="#pc"/></svg>
<svg class="i" style="left:30px;top:584px;width:16px;height:14px"><use href="#net"/></svg>
<div class="r" style="left:52px;top:526px">Bibliotheken</div>
<div class="r" style="left:52px;top:545px">Configuratiescherm</div>
<div class="r" style="left:52px;top:564px">Deze pc</div>
<div class="r" style="left:52px;top:583px">Netwerk</div>
<div class="a" style="left:385px;top:526px;width:43px;height:76px;overflow:hidden">
<div class="r" style="left:0;top:0">Systeemmap</div><div class="r" style="left:0;top:19px">Systeemmap</div><div class="r" style="left:0;top:38px">Systeemmap</div><div class="r" style="left:0;top:57px">Systeemmap</div></div>
<svg class="i" style="left:432px;top:531px;width:9px;height:6px"><path d="M1 5l3.500-4L8 5" stroke="#555" stroke-width="1.500" fill="none"/></svg>
<svg class="i" style="left:432px;top:754px;width:9px;height:6px"><path d="M1 1l3.500 4L8 1" stroke="#555" stroke-width="1.500" fill="none"/></svg>
<div class="a" style="left:17px;top:753px;width:412px;height:12px;overflow:hidden">
<div class="t" style="left:35px;top:2px">Toon Van Daele</div>
<div class="t" style="left:316px;top:2px">[folder]</div>
<div class="t" style="left:371px;top:2px">Systeem</div>
<div class="a" style="left:15px;top:1px;width:6px;height:11px;background:#7a5f4a;border-radius:3px"></div>
</div>
<div class="a" style="left:17px;top:765px;width:428px;height:15px;background:#f0f0f0"></div>
<div class="a" style="left:34px;top:766px;width:258px;height:14px;background:#c8c8c8"></div>
<svg class="i" style="left:22px;top:769px;width:6px;height:9px"><path d="M5 1L1 4.500 5 8" stroke="#555" stroke-width="1.500" fill="none"/></svg>
<svg class="i" style="left:417px;top:769px;width:6px;height:9px"><path d="M1 1l4 3.500L1 8" stroke="#555" stroke-width="1.500" fill="none"/></svg>
<div class="a" style="left:16px;top:780px;width:430px;height:1px;background:#c9c6c0"></div>
<svg class="i" style="left:3px;top:634px;width:9px;height:16px"><path d="M1 1l7 7-7 7z" fill="#5b9bd5"/></svg>

<!-- Left bottom tab -->
<div class="a" style="left:28px;top:783px;width:433px;height:2px;background:#8c8a82"></div>
<svg class="i" style="left:8px;top:790px;width:16px;height:14px"><use href="#addt"/></svg>
<div class="a" style="left:28px;top:784px;width:77px;height:22px;background:#f5f3ef;border:1px solid #aaa69e;border-top:0;border-radius:0 0 3px 3px"></div>
<div class="a b" style="left:31px;top:787px;width:72px;height:17px;background:#fff;border:1px solid #000;text-align:center;line-height:15px">Bureaublad</div>

<!-- Left status -->
<div class="stat" style="left:3px;top:808px;width:457px"><div class="t" style="left:6px;top:5px">0 items selected (Files: 0, folders: 0, virtuals: 0) • 0 B (0 B) in selection</div></div>
<div class="stat" style="left:3px;top:833px;width:457px;height:25px">
<div class="t" style="left:73px;top:5px">19 items (12 folders, 7 files [9,5 KB])</div>
<div class="a" style="left:65px;top:4px;width:1px;height:17px;background:#e8eff4"></div>
<div class="a" style="left:371px;top:4px;width:1px;height:17px;background:#e8eff4"></div>
<div class="t" style="left:378px;top:5px">22,9 GB (24 589 MB)</div>
</div>
<div class="a" style="left:5px;top:837px;width:60px;height:18px;background:#fff;border:1px solid #000"><div class="a" style="left:0;top:0;width:47px;height:16px;background:#a33200;color:#6a2408;text-align:center;line-height:16px">79%</div></div>

<!-- Center pane -->
<div class="a" style="left:471px;top:170px;width:108px;height:690px;background:#eeebe6;border-left:1px solid #d6d3cd;border-right:1px solid #a8a59e"></div>
<div class="a" style="left:462px;top:425px;width:7px;height:355px;background:repeating-linear-gradient(#d4d1cb 0 1px,#eeebe6 1px 3px)"></div>
<div class="a" style="left:476px;top:177px;width:84px;height:1px;border-top:1px dotted #a8a59e"></div>
<div class="t b" style="left:568px;top:171px;font-size:11px">×</div>
<svg class="i" style="left:505px;top:188px;width:48px;height:48px"><use href="#gears"/></svg>
<div class="c" style="left:465px;top:237px">Open item</div>
<svg class="i" style="left:500px;top:258px;width:50px;height:50px"><use href="#ct"/></svg>
<div class="c" style="left:465px;top:306px">Copy to</div>
<svg class="i" style="left:500px;top:327px;width:50px;height:50px"><use href="#ct"/></svg>
<svg class="i" style="left:505px;top:357px;width:16px;height:16px"><use href="#redx"/></svg>
<div class="c" style="left:465px;top:375px">Move to</div>
<svg class="i" style="left:500px;top:407px;width:50px;height:26px"><use href="#rename"/></svg>
<div class="c" style="left:465px;top:444px">Rename</div>
<svg class="i" style="left:505px;top:465px;width:45px;height:44px"><use href="#embed"/></svg>
<div class="c" style="left:465px;top:513px">Embedded viewer</div>
<svg class="i" style="left:505px;top:541px;width:36px;height:38px"><use href="#edit"/></svg>
<div class="c" style="left:465px;top:582px">Edit</div>
<svg class="i" style="left:505px;top:612px;width:44px;height:38px"><use href="#panes"/></svg>
<svg class="i" style="left:518px;top:613px;width:15px;height:15px"><path d="M1 1l13 13M14 1L1 14" stroke="#2a7fc8" stroke-width="3.500" fill="none"/></svg>
<div class="c" style="left:465px;top:651px">Invert panes</div>
<svg class="i" style="left:505px;top:681px;width:44px;height:38px"><use href="#panes"/></svg>
<div class="a" style="left:518px;top:679px;width:14px;height:4px;background:#3a8fd8"></div>
<div class="a" style="left:518px;top:684px;width:14px;height:4px;background:#3a8fd8"></div>
<div class="c" style="left:465px;top:720px">Duplicate pane</div>
<svg class="i" style="left:508px;top:750px;width:30px;height:25px"><use href="#fold"/></svg>
<svg class="i" style="left:531px;top:768px;width:14px;height:14px"><use href="#plus"/></svg>
<div class="c" style="left:465px;top:789px">Create Item</div>
<svg class="i" style="left:567px;top:847px;width:8px;height:10px"><path d="M1 1l3 3 3-3M1 5l3 3 3-3" stroke="#222" stroke-width="1.200" fill="none"/></svg>

<!-- Right pane -->
<div class="a" style="left:580px;top:193px;width:457px;height:1px;background:#8c8a82"></div>
<div class="tab b" style="left:659px;top:174px;width:58px;height:19px;line-height:21px;color:#1c1c1c">Preview</div>
<div class="a b" style="left:582px;top:173px;width:76px;height:21px;background:linear-gradient(#fff,#f2f0ec);border:1px solid #a8a49c;border-bottom:0;border-radius:3px 3px 0 0;text-align:center;line-height:20px">Exploration</div>
<svg class="i" style="left:593px;top:201px;width:15px;height:15px;color:#c6c4bf"><use href="#scis"/></svg>
<svg class="i" style="left:616px;top:200px;width:16px;height:16px"><use href="#copy"/></svg>
<svg class="i" style="left:639px;top:199px;width:16px;height:17px"><use href="#pastec"/></svg>
<svg class="i" style="left:663px;top:199px;width:15px;height:17px;opacity:.35"><use href="#recyc"/></svg>
<svg class="i" style="left:686px;top:201px;width:14px;height:14px;opacity:.28;filter:grayscale(1)"><use href="#redx"/></svg>
<div class="sep" style="left:706px;top:198px;height:18px"></div>
<div class="a" style="left:711px;top:197px;width:22px;height:22px;border:1px solid #6e6a62;border-radius:3px;background:#d8d5cf"></div>
<svg class="i" style="left:714px;top:201px;width:15px;height:13px"><use href="#v1"/></svg>
<svg class="i" style="left:737px;top:201px;width:15px;height:13px"><use href="#v2"/></svg>
<svg class="i" style="left:760px;top:201px;width:15px;height:13px"><use href="#v3"/></svg>
<svg class="i" style="left:783px;top:201px;width:15px;height:13px"><use href="#v4"/></svg>
<svg class="i" style="left:806px;top:201px;width:15px;height:13px"><use href="#v5"/></svg>
<svg class="i" style="left:828px;top:201px;width:16px;height:13px"><use href="#thumb"/></svg>
<div class="sep" style="left:851px;top:198px;height:18px"></div>
<svg class="i" style="left:858px;top:200px;width:16px;height:16px;color:#2a8fe0"><use href="#top"/></svg>
<svg class="i" style="left:881px;top:200px;width:16px;height:16px;color:#2a8fe0"><use href="#upa"/></svg>
<svg class="i" style="left:904px;top:200px;width:16px;height:16px"><use href="#refr"/></svg>
<div class="sep" style="left:926px;top:198px;height:18px"></div>
<svg class="i" style="left:933px;top:201px;width:16px;height:14px"><use href="#clock"/></svg>
<div class="tri dn" style="left:954px;top:207px"></div>
<svg class="i" style="left:968px;top:201px;width:16px;height:14px"><use href="#la"/></svg>
<div class="tri dn" style="left:989px;top:207px"></div>
<svg class="i" style="left:1002px;top:201px;width:16px;height:14px"><use href="#ra"/></svg>
<div class="tri dn" style="left:1024px;top:207px"></div>

<div class="a" style="left:581px;top:221px;width:456px;height:24px;background:#bdccda"></div>
<svg class="i" style="left:585px;top:226px;width:16px;height:14px"><use href="#pc"/></svg>
<div class="tri rt" style="left:611px;top:229px"></div>
<div class="t" style="left:623px;top:224px">Deze pc</div>
<div class="tri rt" style="left:676px;top:228px"></div>

<div class="a" style="left:594px;top:247px;width:430px;height:19px;background:#eeebe6;border-bottom:1px solid #9a968f;border-top:1px solid #c9c6c0"></div>
<div class="a" style="left:594px;top:266px;width:430px;height:516px;background:#fff;border-left:1px solid #b5b2ac;border-right:1px solid #b5b2ac"></div>
<div class="tri up" style="left:604px;top:255px;border-width:0 4px 4px 4px"></div>
<div class="t" style="left:621px;top:249px">Naam</div>
<div class="sep" style="left:864px;top:248px;height:17px;background:#9a968f"></div>
<div class="t" style="left:871px;top:249px">Type</div>
<div class="sep" style="left:954px;top:248px;height:17px;background:#9a968f"></div>
<div class="a" style="left:960px;top:249px;width:63px;height:16px;overflow:hidden"><div class="t" style="left:33px;top:0">Totale grootte</div></div>

<div class="bg" style="left:595px;top:285px;width:428px;background:#bfbfbf"></div>
<div class="bg" style="left:595px;top:323px;width:428px;background:#bfbfbf"></div>
<div class="bg" style="left:595px;top:361px;width:428px;background:#bfbfbf"></div>
<div class="bg" style="left:595px;top:399px;width:428px;background:#bfbfbf"></div>
<div class="bg" style="left:595px;top:437px;width:428px;background:#bfbfbf"></div>
<div class="bg" style="left:595px;top:475px;width:428px;background:#bfbfbf"></div>
<div class="bg" style="left:595px;top:494px;width:428px;background:#d4a9a9"></div>
<div class="bg" style="left:595px;top:513px;width:428px;background:#bfbfbf"></div>
<div class="bg" style="left:595px;top:551px;width:428px;background:#bfbfbf"></div>

<svg class="i" style="left:610px;top:268px;width:12px;height:16px"><use href="#docl"/></svg>
<svg class="i" style="left:608px;top:287px;width:16px;height:16px"><use href="#cube"/></svg>
<svg class="i" style="left:608px;top:308px;width:16px;height:12px"><use href="#pic"/></svg>
<svg class="i" style="left:608px;top:327px;width:16px;height:13px"><use href="#desk"/></svg>
<svg class="i" style="left:610px;top:344px;width:12px;height:16px"><use href="#docl"/></svg>
<svg class="i" style="left:608px;top:363px;width:16px;height:16px"><use href="#dl"/></svg>
<svg class="i" style="left:610px;top:382px;width:12px;height:16px"><use href="#note"/></svg>
<svg class="i" style="left:609px;top:401px;width:14px;height:16px"><use href="#film"/></svg>
<svg class="i" style="left:608px;top:422px;width:16px;height:14px"><use href="#ndrv"/></svg>
<svg class="i" style="left:608px;top:441px;width:16px;height:14px"><use href="#xdrv"/></svg>
<svg class="i" style="left:608px;top:459px;width:16px;height:14px"><use href="#sdrv"/></svg>
<svg class="i" style="left:608px;top:477px;width:16px;height:14px"><use href="#drv"/></svg>
<svg class="i" style="left:608px;top:497px;width:16px;height:14px"><use href="#lap"/></svg>
<svg class="i" style="left:608px;top:515px;width:16px;height:14px"><use href="#drv"/></svg>
<svg class="i" style="left:608px;top:534px;width:16px;height:14px"><use href="#drv"/></svg>
<svg class="i" style="left:608px;top:553px;width:16px;height:14px"><use href="#drv"/></svg>
<svg class="i" style="left:608px;top:574px;width:16px;height:14px"><use href="#xdrv"/></svg>

<div class="r" style="left:630px;top:267px">..</div>
<div class="r" style="left:630px;top:286px">3D-objecten</div><div class="r" style="left:873px;top:286px">Systeemmap</div>
<div class="r" style="left:630px;top:305px">Afbeeldingen</div><div class="r" style="left:873px;top:305px">Systeemmap</div>
<div class="r" style="left:630px;top:324px">Bureaublad</div><div class="r" style="left:873px;top:324px">Systeemmap</div>
<div class="r" style="left:630px;top:343px">Documenten</div><div class="r" style="left:873px;top:343px">Systeemmap</div>
<div class="r" style="left:630px;top:362px">Downloads</div><div class="r" style="left:873px;top:362px">Systeemmap</div>
<div class="r" style="left:630px;top:381px">Muziek</div><div class="r" style="left:873px;top:381px">Systeemmap</div>
<div class="r" style="left:630px;top:400px">Video's</div><div class="r" style="left:873px;top:400px">Systeemmap</div>
<div class="r p" style="left:630px;top:419px">artikelen (\\nas2\toon\google drive) (A:)</div><div class="r" style="left:873px;top:419px">Netwerkstati...</div>
<div class="r p" style="left:630px;top:438px">bvba (\\nas2\toon\google drive) (B:)</div><div class="r" style="left:873px;top:438px">Niet-verbon...</div>
<div class="r" style="left:630px;top:457px">Systeem (C:)</div><div class="r" style="left:873px;top:457px;letter-spacing:-.2px">Lokale schijf</div>
<div class="r" style="left:630px;top:476px">DATA (D:)</div><div class="r" style="left:873px;top:476px;letter-spacing:-.2px">Lokale schijf</div>
<div class="r p" style="left:630px;top:495px">USB-station (H:)</div><div class="r" style="left:873px;top:495px">USB-station</div>
<div class="r" style="left:630px;top:514px">Lokale schijf (N:)</div><div class="r" style="left:873px;top:514px;letter-spacing:-.2px">Lokale schijf</div>
<div class="r" style="left:630px;top:533px">Progs (P:)</div><div class="r" style="left:873px;top:533px;letter-spacing:-.2px">Lokale schijf</div>
<div class="r" style="left:630px;top:552px">BelangrijkeData (X:)</div><div class="r" style="left:873px;top:552px;letter-spacing:-.2px">Lokale schijf</div>
<div class="r p" style="left:630px;top:571px">Appartement! (\\nas2\toon\Google Drive)...</div><div class="r" style="left:873px;top:571px">Niet-verbon...</div>

<div class="a" style="left:595px;top:765px;width:429px;height:15px;background:#f0f0f0"></div>
<div class="a" style="left:612px;top:766px;width:281px;height:14px;background:#c8c8c8"></div>
<svg class="i" style="left:600px;top:769px;width:6px;height:9px"><path d="M5 1L1 4.500 5 8" stroke="#555" stroke-width="1.500" fill="none"/></svg>
<svg class="i" style="left:1011px;top:769px;width:6px;height:9px"><path d="M1 1l4 3.500L1 8" stroke="#555" stroke-width="1.500" fill="none"/></svg>
<svg class="i" style="left:582px;top:505px;width:9px;height:16px"><path d="M1 1l7 7-7 7z" fill="#5b9bd5"/></svg>
<svg class="i" style="left:1027px;top:505px;width:9px;height:16px"><path d="M8 1L1 8l7 7z" fill="#5b9bd5"/></svg>

<div class="a" style="left:606px;top:783px;width:431px;height:2px;background:#8c8a82"></div>
<svg class="i" style="left:586px;top:790px;width:16px;height:14px"><use href="#addt"/></svg>
<div class="a" style="left:606px;top:784px;width:59px;height:22px;background:#f5f3ef;border:1px solid #aaa69e;border-top:0;border-radius:0 0 3px 3px"></div>
<div class="a b" style="left:609px;top:787px;width:54px;height:17px;background:#fff;border:1px solid #000;text-align:center;line-height:15px">Deze pc</div>

<div class="stat" style="left:581px;top:808px;width:456px"><div class="t" style="left:6px;top:5px">0 items selected (Files: 0, folders: 0, virtuals: 0) • 0 B (0 B) in selection</div></div>
<div class="stat" style="left:581px;top:833px;width:456px"><div class="t" style="left:6px;top:5px">16 items (16 folders, 0 files [0 B])</div><div class="a" style="left:305px;top:4px;width:1px;height:17px;background:#e8eff4"></div></div>

<!-- Tooltip -->
<div class="a" style="left:19px;top:603px;width:488px;height:150px;background:linear-gradient(#fdfdfc 0,#f3f1ef 53%,#ece8e4 56%,#ece9e5 100%);border:1px solid #63635f;box-shadow:2px 2px 3px rgba(0,0,0,.45)"></div>
<svg class="i" style="left:31px;top:614px;width:135px;height:128px"><use href="#globemon" width="135" height="128"/></svg>
<div class="t" style="left:168px;top:663px;letter-spacing:-.03px">Netwerk</div>
<div class="t" style="left:168px;top:678px;letter-spacing:-.03px">Toegang verkrijgen tot computers en apparaten in het netwerk.</div>

<!-- Bottom bar -->
<div class="a" style="left:2px;top:859px;width:1036px;height:1px;background:#c9c6c0"></div>
<div class="t b" style="left:6px;top:863px;font-size:11px">×</div>
<svg class="i" style="left:20px;top:864px;width:18px;height:18px"><use href="#fav"/></svg>
<div class="t b" style="left:45px;top:865px">Afbeeldingen</div>
<div class="t b" style="left:130px;top:865px">Bibliotheken</div>
<div class="t b" style="left:211px;top:865px">Bureaublad</div>
<div class="t b" style="left:284px;top:865px">Documenten</div>
<div class="t b" style="left:367px;top:865px">Muziek</div>
<div class="t b" style="left:418px;top:865px">Video's</div>
<div class="a" style="left:0;top:885px;width:1040px;height:21px;background:linear-gradient(#9dbcd2 0%,#4f86aa 46%,#0a5478 50%,#0a5478 75%,#1e6a8f 100%)"></div>
<div class="a" style="left:0;top:31px;width:2px;height:854px;background:#1b5c78"></div>
<div class="a" style="left:1038px;top:31px;width:2px;height:854px;background:#1b5c78"></div>
<svg class="i" style="left:1026px;top:892px;width:12px;height:12px"><path d="M10 1h1v1h-1zM6 5h1v1H6zM10 5h1v1h-1zM2 9h1v1H2zM6 9h1v1H6zM10 9h1v1h-1z" fill="#dfe8ee"/></svg>
</body></html>
